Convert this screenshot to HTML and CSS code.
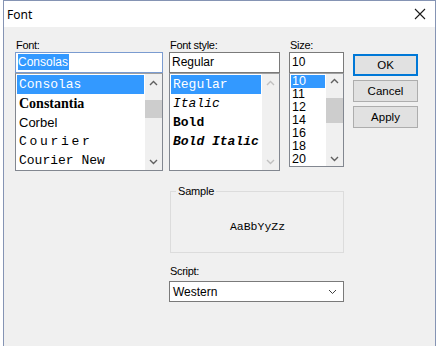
FILE: index.html
```html
<!DOCTYPE html>
<html>
<head>
  <title>Font</title>
  <link rel="stylesheet" href="styles.css">
</head>
<body>
  <div class="window">
    <div class="titlebar">
      <span class="title">Font</span>
      <svg class="close" width="12" height="12" viewBox="0 0 12 12">
        <path d="M1 1 L11 11 M11 1 L1 11" stroke="#1a1a1a" stroke-width="1.1" fill="none"/>
      </svg>
    </div>
    <div class="client">
      <div class="top-row">
        <div class="col col-font">
          <div class="label">Font:</div>
          <div class="textbox focused"><span class="sel">Consolas</span></div>
          <div class="listbox">
            <div class="items">
              <div class="item f-consolas selected">Consolas</div>
              <div class="item f-constantia">Constantia</div>
              <div class="item f-corbel">Corbel</div>
              <div class="item f-courier">Courier</div>
              <div class="item f-couriernew">Courier New</div>
            </div>
            <div class="scrollbar">
              <div class="arrow"><svg width="9" height="6" viewBox="0 0 9 6"><path d="M1 5 L4.5 1.5 L8 5" stroke="#606060" stroke-width="1.4" fill="none"/></svg></div>
              <div class="thumb thumb-font"></div>
              <div class="arrow bottom"><svg width="9" height="6" viewBox="0 0 9 6"><path d="M1 1 L4.5 4.5 L8 1" stroke="#606060" stroke-width="1.4" fill="none"/></svg></div>
            </div>
          </div>
        </div>

        <div class="col col-style">
          <div class="label">Font style:</div>
          <div class="textbox">Regular</div>
          <div class="listbox">
            <div class="items">
              <div class="item mono selected">Regular</div>
              <div class="item mono italic">Italic</div>
              <div class="item mono bold">Bold</div>
              <div class="item mono bold italic">Bold Italic</div>
            </div>
            <div class="scrollbar">
              <div class="arrow"><svg width="9" height="6" viewBox="0 0 9 6"><path d="M1 5 L4.5 1.5 L8 5" stroke="#c0c0c0" stroke-width="1.4" fill="none"/></svg></div>
              <div class="arrow bottom"><svg width="9" height="6" viewBox="0 0 9 6"><path d="M1 1 L4.5 4.5 L8 1" stroke="#c0c0c0" stroke-width="1.4" fill="none"/></svg></div>
            </div>
          </div>
        </div>

        <div class="col col-size">
          <div class="label">Size:</div>
          <div class="textbox">10</div>
          <div class="listbox short">
            <div class="items">
              <div class="item size selected">10</div>
              <div class="item size">11</div>
              <div class="item size">12</div>
              <div class="item size">14</div>
              <div class="item size">16</div>
              <div class="item size">18</div>
              <div class="item size">20</div>
            </div>
            <div class="scrollbar">
              <div class="arrow small"><svg width="9" height="6" viewBox="0 0 9 6"><path d="M1 5 L4.5 1.5 L8 5" stroke="#606060" stroke-width="1.4" fill="none"/></svg></div>
              <div class="thumb thumb-size"></div>
              <div class="arrow small bottom"><svg width="9" height="6" viewBox="0 0 9 6"><path d="M1 1 L4.5 4.5 L8 1" stroke="#606060" stroke-width="1.4" fill="none"/></svg></div>
            </div>
          </div>
        </div>

        <div class="col col-buttons">
          <div class="button default">OK</div>
          <div class="button">Cancel</div>
          <div class="button">Apply</div>
        </div>
      </div>

      <fieldset class="sample">
        <legend>Sample</legend>
        <div class="sample-text">AaBbYyZz</div>
      </fieldset>

      <div class="script">
        <div class="label">Script:</div>
        <div class="combo">
          <span>Western</span>
          <svg width="9" height="6" viewBox="0 0 9 6"><path d="M1 1 L4.5 4.5 L8 1" stroke="#404040" stroke-width="1" fill="none"/></svg>
        </div>
      </div>
    </div>
  </div>
</body>
</html>
```

FILE: styles.css
```css
* {padding: 0; margin: 0; box-sizing: border-box;}
html {font-family: "Liberation Sans", Arial, sans-serif; font-size: 11px;}
body {background: #fff; height: 346px; overflow: hidden;}

.window {margin-left: 3px; width: 433px; height: 360px; border: 1px solid #8594b4; border-bottom: none; background: #f0f0f0;}

.titlebar {height: 26px; background: #fff; display: flex; align-items: center; justify-content: space-between; padding: 0 9px 0 3px;}
.title {font-family: "Noto Sans", "Open Sans", sans-serif; font-size: 12px; color: #000; padding-top: 1px;}

.client {padding: 11px 0 0 11px;}

.top-row {display: flex; align-items: flex-start;}
.col-font {width: 148px;}
.col-style {width: 111px; margin-left: 6px;}
.col-size {width: 55px; margin-left: 9px;}
.col-buttons {width: 65px; margin-left: 9px; padding-top: 16px; display: flex; flex-direction: column; gap: 4px;}

.label {height: 14px; line-height: 14px; color: #000; letter-spacing: -0.3px; padding-left: 1px;}

.textbox {height: 21px; border: 1px solid #7a7a7a; background: #fff; font-size: 12px; line-height: 19px; padding-left: 2px; color: #000; white-space: nowrap; overflow: hidden;}
.textbox.focused {border-color: #7a9bd0;}
.textbox .sel {background: #3399ff; color: #fff; display: inline-block; line-height: 16px; padding-right: 1px;}

.listbox {height: 98px; border: 1px solid #828790; border-top-color: #a0a0a0; background: #fff; display: flex; overflow: hidden;}
.listbox.short {height: 94px;}
.items {flex: 1; padding: 1px 1px 0 1px; overflow: hidden;}
.item {height: 19px; line-height: 19px; padding-left: 2px; white-space: nowrap; color: #000;}
.item.selected {background: #3399ff; color: #fff;}

.f-consolas {font-family: "Liberation Mono", monospace; font-size: 13px;}
.f-constantia {font-family: "Liberation Serif", serif; font-size: 14px; font-weight: bold;}
.f-corbel {font-family: "Liberation Sans", sans-serif; font-size: 13px;}
.f-courier {font-family: "Liberation Mono", monospace; font-size: 13px; letter-spacing: 2.7px;}
.f-couriernew {font-family: "Liberation Mono", monospace; font-size: 13px;}
.mono {font-family: "Liberation Mono", monospace; font-size: 13px;}
.bold {font-weight: bold;}
.italic {font-style: italic;}
.item.size {height: 13px; line-height: 13px; font-size: 12.5px; padding-left: 1px; width: 34px;}

.scrollbar {width: 17px; background: #f0f0f0; display: flex; flex-direction: column;}
.arrow {height: 17px; display: flex; align-items: center; justify-content: center;}
.arrow.bottom {margin-top: auto;}
.arrow.small {height: 14px;}
.thumb {width: 17px; background: #cdcdcd;}
.thumb-font {height: 18px; margin-top: 9px;}
.thumb-size {height: 25px; margin-top: 10px;}

.button {height: 22px; border: 1px solid #adadad; background: #e1e1e1; text-align: center; line-height: 20px; font-size: 11.5px; color: #000;}
.button.default {border: 2px solid #0078d7; line-height: 18px;}

.sample {margin: 13px 0 0 155px; width: 174px; border: 1px solid #dcdcdc; padding: 0;}
.sample legend {margin-left: 5px; padding: 0 2px; height: 14px; line-height: 14px; font-size: 11px; letter-spacing: -0.2px;}
.sample-text {padding: 22px 0 18px; text-align: center; font-family: "Liberation Mono", monospace; font-size: 11.5px; line-height: 14px; color: #000; padding-left: 1px;}

.script {margin: 11px 0 0 154px; width: 175px;}
.script .label {padding-left: 1px;}
.combo {margin-top: 3px; height: 21px; border: 1px solid #7a7a7a; background: #fff; display: flex; align-items: center; justify-content: space-between; padding: 0 6px 0 3px; font-size: 12px;}
```
